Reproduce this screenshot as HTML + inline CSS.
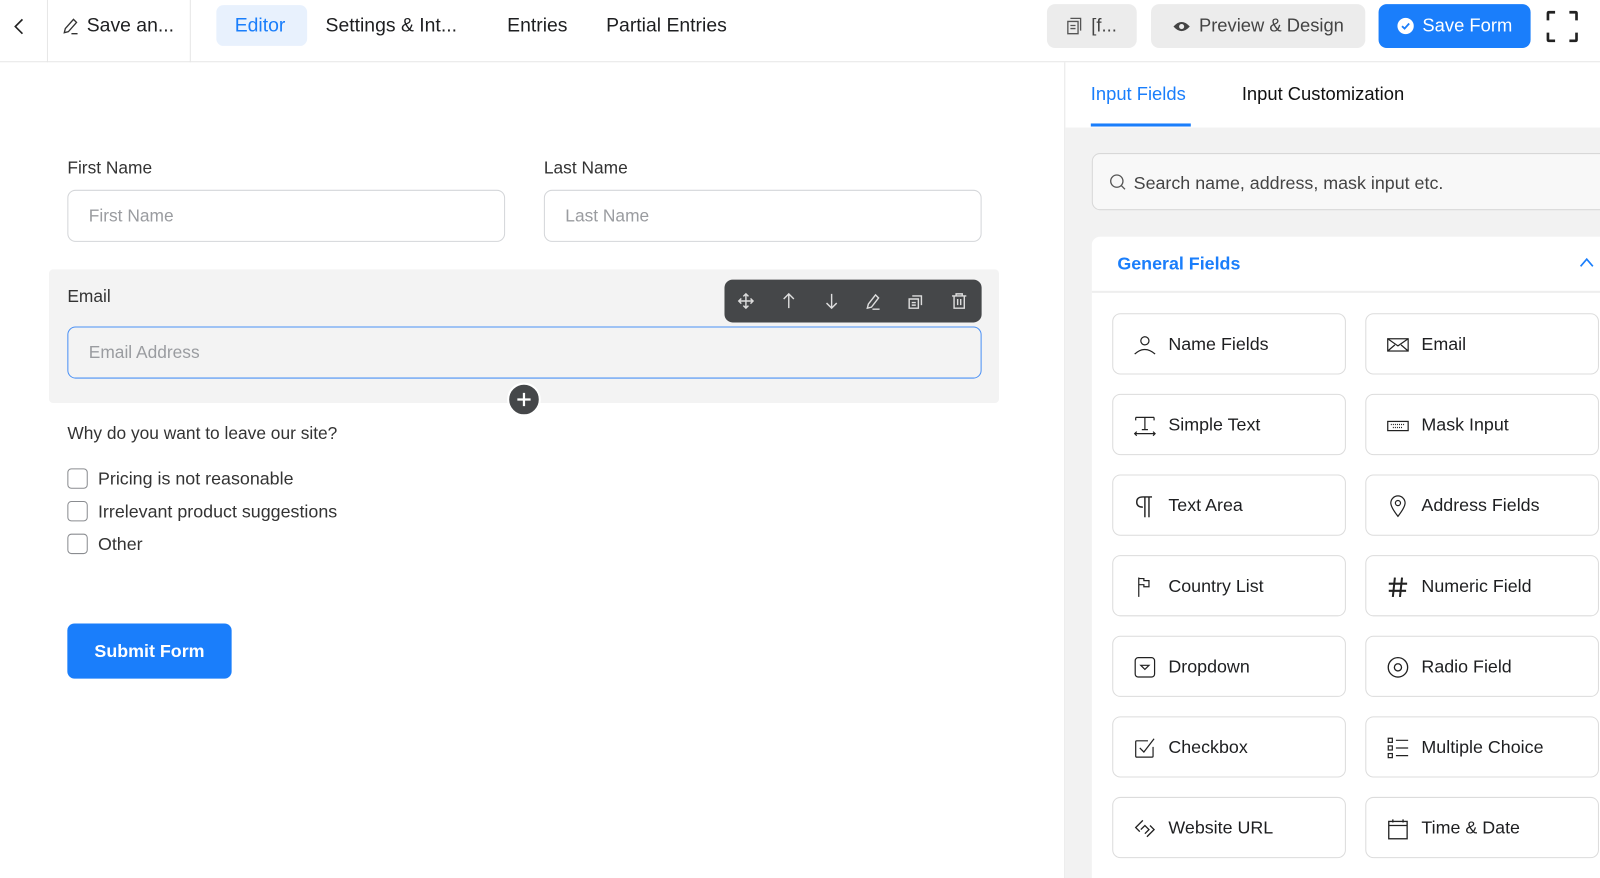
<!DOCTYPE html>
<html><head><meta charset="utf-8"><style>
*{box-sizing:border-box;margin:0;padding:0}
html,body{width:1600px;height:878px;overflow:hidden}
body{font-family:"Liberation Sans",sans-serif;color:#1e1f21;background:#fff;position:relative}
#w{position:absolute;left:0;top:0;width:1568px;height:861px;transform:scale(1.0204);transform-origin:0 0}
.a{position:absolute}
.top{left:0;top:0;width:1600px;height:61px;border-bottom:1px solid #e6e6e6;background:#fff}
.nav{font-size:19px;color:#1e1f21;top:15px}
.btn{border-radius:8px;height:43px;top:4px;font-size:18px;display:flex;align-items:center;justify-content:center;gap:8px}
.lbl{font-size:17px;color:#333}
.inp{border:1px solid #d4d6d9;border-radius:8px;height:51px;font-size:17px;color:#9a9ca0;padding-left:20px;display:flex;align-items:center;background:#fff}
.cb{left:66px;width:20px;height:20px;border:1.5px solid #8a8c90;border-radius:4px}
.cbt{left:96px;font-size:17.5px;color:#333}
.fb{width:229px;height:60px;border:1px solid #dcdcdc;border-radius:8px;background:#fff;font-size:17.5px;color:#1e1f21;display:flex;align-items:center;padding-left:54px}
.fb svg{position:absolute;left:20px;top:19px}
</style></head><body><div id="w">
<div class="a top"></div>
<svg class="a" style="left:12px;top:17px" width="14" height="18" viewBox="0 0 14 18"><path d="M10 2 L3 9 L10 16" fill="none" stroke="#222" stroke-width="1.6"/></svg>
<div class="a" style="left:46px;top:0;width:1px;height:61px;background:#e6e6e6"></div>
<div class="a" style="left:186px;top:0;width:1px;height:61px;background:#e6e6e6"></div>
<svg class="a" style="left:60px;top:16px" width="20" height="20" viewBox="0 0 20 20"><path d="M12 3 L15 6 L7 15 L3 16 L4 12 Z M10 17 H16" fill="none" stroke="#333" stroke-width="1.3"/></svg>
<div class="a nav" style="left:85px">Save an...</div>
<div class="a" style="left:212px;top:5px;width:89px;height:40px;background:#e8f1fd;border-radius:7px"></div>
<div class="a nav" style="left:230px;color:#1a7efb">Editor</div>
<div class="a nav" style="left:319px">Settings &amp; Int...</div>
<div class="a nav" style="left:497px">Entries</div>
<div class="a nav" style="left:594px">Partial Entries</div>
<div class="a btn" style="left:1026px;width:88px;background:#ececec;color:#444"><svg width="16" height="17" viewBox="0 0 16 17"><path d="M4 1 H14 V13 M1.5 4 H11.5 V16 H1.5 Z M4 8 H9 M4 11 H9" fill="none" stroke="#555" stroke-width="1.3"/></svg>[f...</div>
<div class="a btn" style="left:1128px;width:210px;background:#ececec;color:#444"><svg width="18" height="12" viewBox="0 0 18 12"><path d="M1 6 Q9 -3 17 6 Q9 15 1 6Z" fill="#444"/><circle cx="9" cy="6" r="2.5" fill="#ececec"/></svg>Preview &amp; Design</div>
<div class="a btn" style="left:1351px;width:149px;background:#1a7efb;color:#fff"><svg width="17" height="17" viewBox="0 0 17 17"><circle cx="8.5" cy="8.5" r="8" fill="#fff"/><path d="M5 8.7 L7.5 11 L12 6" fill="none" stroke="#1a7efb" stroke-width="1.8"/></svg>Save Form</div>
<svg class="a" style="left:1515px;top:10px" width="32" height="32" viewBox="0 0 32 32"><path d="M2 10 V3 Q2 2 3 2 H9 M23 2 H29 Q30 2 30 3 V10 M30 22 V29 Q30 30 29 30 H23 M9 30 H3 Q2 30 2 29 V22" fill="none" stroke="#222" stroke-width="2.6"/></svg>

<div class="a lbl" style="left:66px;top:155px">First Name</div>
<div class="a lbl" style="left:533px;top:155px">Last Name</div>
<div class="a inp" style="left:66px;top:186px;width:429px">First Name</div>
<div class="a inp" style="left:533px;top:186px;width:429px">Last Name</div>
<div class="a" style="left:48px;top:264px;width:931px;height:131px;background:#f3f3f3;border-radius:4px"></div>
<div class="a lbl" style="left:66px;top:281px">Email</div>
<div class="a inp" style="left:66px;top:320px;width:896px;border-color:#4a90f5;background:#f3f3f3">Email Address</div>
<div class="a" style="left:710px;top:274px;width:252px;height:42px;background:#454749;border-radius:8px"></div>
<svg class="a" style="left:710px;top:274px" width="252" height="42" viewBox="0 0 252 42" fill="none" stroke="#ddd" stroke-width="1.4">
<path d="M21 14 V28 M14 21 H28 M18.5 16.5 L21 14 L23.5 16.5 M18.5 25.5 L21 28 L23.5 25.5 M16.5 18.5 L14 21 L16.5 23.5 M25.5 18.5 L28 21 L25.5 23.5"/>
<path d="M63 28 V14 M58 19 L63 14 L68 19"/>
<path d="M105 14 V28 M100 23 L105 28 L110 23"/>
<path d="M148 15 L151 18 L144 27 L140 28 L141 24 Z M145 29 H152"/>
<path d="M184 16 H193 V25 M181 19 H190 V28 H181 Z M183.5 22.5 H187.5 M183.5 25 H187.5"/>
<path d="M223 16 H237 M227 16 V14 H233 V16 M225 16 V28 H235 V16 M228.5 19 V25 M231.5 19 V25"/>
</svg>
<div class="a" style="left:497px;top:375px;width:33px;height:33px;border-radius:50%;background:#454749;border:2px solid #fff"></div>
<svg class="a" style="left:505px;top:383px" width="17" height="17" viewBox="0 0 17 17"><path d="M8.5 2 V15 M2 8.5 H15" stroke="#fff" stroke-width="2.2"/></svg>
<div class="a lbl" style="left:66px;top:415px">Why do you want to leave our site?</div>
<div class="a cb" style="top:459px"></div><div class="a cbt" style="top:459px">Pricing is not reasonable</div>
<div class="a cb" style="top:491px"></div><div class="a cbt" style="top:491px">Irrelevant product suggestions</div>
<div class="a cb" style="top:523px"></div><div class="a cbt" style="top:523px">Other</div>
<div class="a" style="left:66px;top:611px;width:161px;height:54px;background:#1a7efb;border-radius:7px;color:#fff;font-size:17.5px;font-weight:bold;display:flex;align-items:center;justify-content:center">Submit Form</div>

<div class="a" style="left:1043px;top:61px;width:1px;height:817px;background:#e6e6e6"></div>
<div class="a" style="left:1044px;top:125px;width:556px;height:753px;background:#f2f2f2"></div>
<div class="a" style="left:1069px;top:82px;font-size:18px;color:#1a7efb">Input Fields</div>
<div class="a" style="left:1069px;top:121px;width:98px;height:3px;background:#1a7efb"></div>
<div class="a" style="left:1217px;top:82px;font-size:18px;color:#111">Input Customization</div>
<div class="a" style="left:1070px;top:150px;width:560px;height:56px;background:#f8f8f8;border:1px solid #d8d8d8;border-radius:8px"></div>
<svg class="a" style="left:1087px;top:170px" width="17" height="17" viewBox="0 0 17 17"><circle cx="7.5" cy="7.5" r="6" fill="none" stroke="#555" stroke-width="1.3"/><path d="M12 12 L15.5 15.5" stroke="#555" stroke-width="1.3"/></svg>
<div class="a" style="left:1111px;top:169px;font-size:17.5px;color:#444">Search name, address, mask input etc.</div>
<div class="a" style="left:1070px;top:232px;width:560px;height:660px;background:#fff;border-radius:8px"></div>
<div class="a" style="left:1070px;top:285px;width:530px;height:2px;background:#eee"></div>
<div class="a" style="left:1095px;top:248px;font-size:17.5px;font-weight:bold;color:#1a7efb">General Fields</div>
<svg class="a" style="left:1547px;top:251px" width="16" height="12" viewBox="0 0 16 12"><path d="M2 10 L8 3 L14 10" fill="none" stroke="#1a7efb" stroke-width="1.6"/></svg>

<div class="a fb" style="left:1090px;top:307px"><svg width="22" height="22" viewBox="0 0 22 22" fill="none" stroke="#222" stroke-width="1.2"><circle cx="11" cy="7" r="4"/><path d="M1 20 Q11 11 21 20"/></svg>Name Fields</div>
<div class="a fb" style="left:1338px;top:307px"><svg width="22" height="22" viewBox="0 0 22 22" fill="none" stroke="#222" stroke-width="1.2"><rect x="1" y="5" width="20" height="12"/><path d="M1 5 L11 12 L21 5 M1 17 L8 11 M21 17 L14 11"/></svg>Email</div>
<div class="a fb" style="left:1090px;top:386px"><svg width="22" height="22" viewBox="0 0 22 22" fill="none" stroke="#222" stroke-width="1.2"><path d="M2 3 H20 M2 3 V6 M20 3 V6 M11 3 V15 M8 15 H14 M1 19 H21 M3 17 L1 19 L3 21 M19 17 L21 19 L19 21"/></svg>Simple Text</div>
<div class="a fb" style="left:1338px;top:386px"><svg width="22" height="22" viewBox="0 0 22 22" fill="none" stroke="#222" stroke-width="1.2"><rect x="1" y="7" width="20" height="9"/><path d="M4 10 H18 M6 13 H16" stroke-dasharray="1 1"/></svg>Mask Input</div>
<div class="a fb" style="left:1090px;top:465px"><svg width="22" height="22" viewBox="0 0 22 22" fill="none" stroke="#222" stroke-width="1.4"><path d="M18 2 H9 Q3 2 3 7 Q3 12 9 12 M11 2 V22 M15 2 V22"/></svg>Text Area</div>
<div class="a fb" style="left:1338px;top:465px"><svg width="22" height="22" viewBox="0 0 22 22" fill="none" stroke="#222" stroke-width="1.2"><path d="M11 21 Q4 12 4 8 A7 7 0 0 1 18 8 Q18 12 11 21Z"/><circle cx="11" cy="8" r="2.5"/></svg>Address Fields</div>
<div class="a fb" style="left:1090px;top:544px"><svg width="22" height="22" viewBox="0 0 22 22" fill="none" stroke="#222" stroke-width="1.2"><path d="M5 2 V21 M5 3 H10 L10 5 H15 V11 H10 L10 9 H5"/></svg>Country List</div>
<div class="a fb" style="left:1338px;top:544px"><svg width="22" height="22" viewBox="0 0 22 22" fill="none" stroke="#222" stroke-width="2"><path d="M8 2 L6 21 M15 2 L13 21 M2 8 H20 M2 15 H19"/></svg>Numeric Field</div>
<div class="a fb" style="left:1090px;top:623px"><svg width="22" height="22" viewBox="0 0 22 22" fill="none" stroke="#222" stroke-width="1.2"><rect x="1.5" y="1.5" width="19" height="19" rx="3"/><path d="M7 9 H15 L11 13 Z"/></svg>Dropdown</div>
<div class="a fb" style="left:1338px;top:623px"><svg width="22" height="22" viewBox="0 0 22 22" fill="none" stroke="#222" stroke-width="1.3"><circle cx="11" cy="11" r="9.5"/><circle cx="11" cy="11" r="3.5"/></svg>Radio Field</div>
<div class="a fb" style="left:1090px;top:702px"><svg width="22" height="22" viewBox="0 0 22 22" fill="none" stroke="#222" stroke-width="1.2"><path d="M19 10 V19 Q19 20 18 20 H3 Q2 20 2 19 V5 Q2 4 3 4 H14 M6 11 L10 15 L20 2"/></svg>Checkbox</div>
<div class="a fb" style="left:1338px;top:702px"><svg width="22" height="22" viewBox="0 0 22 22" fill="none" stroke="#222" stroke-width="1.2"><rect x="1.5" y="1.5" width="4" height="4"/><rect x="1.5" y="9" width="4" height="4"/><rect x="1.5" y="16.5" width="4" height="4"/><path d="M9 3.5 H21 M9 11 H21 M9 18.5 H21"/></svg>Multiple Choice</div>
<div class="a fb" style="left:1090px;top:781px"><svg width="22" height="22" viewBox="0 0 22 22" fill="none" stroke="#222" stroke-width="1.3"><path d="M9 3 L2 10 L6 14 M13 19 L20 12 L16 8 M7 12 L11 8 L15 12 L11 16"/></svg>Website URL</div>
<div class="a fb" style="left:1338px;top:781px"><svg width="22" height="22" viewBox="0 0 22 22" fill="none" stroke="#222" stroke-width="1.3"><rect x="2" y="4" width="18" height="17"/><path d="M2 8 H20 M6 2 V5 M16 2 V5"/></svg>Time &amp; Date</div>
</div></body></html>
